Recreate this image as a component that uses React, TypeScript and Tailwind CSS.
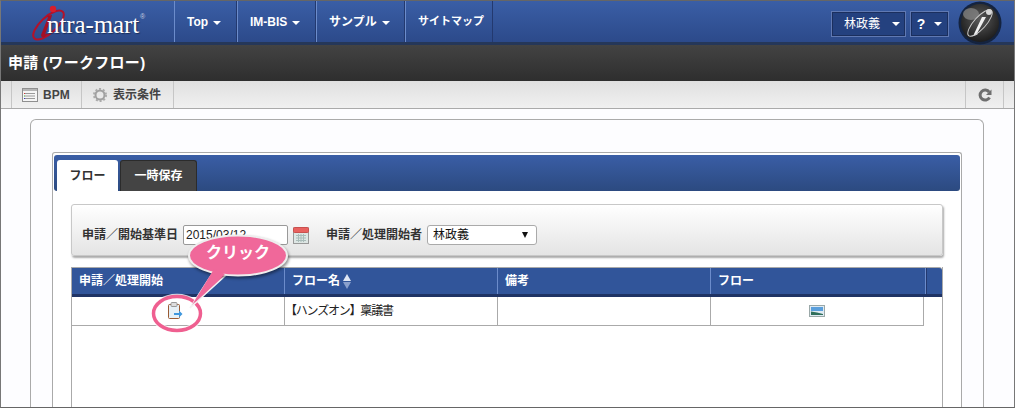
import React from 'react';

const FONT = "font-['Liberation_Sans','Noto_Sans_CJK_JP',sans-serif]";

const Caret = ({ className = '' }: { className?: string }) => (
  <span className={`inline-block w-0 h-0 border-x-[4px] border-x-transparent border-t-[4px] border-t-white ${className}`} />
);

const Logo = () => (
  <div className="relative w-[173px] h-full shrink-0">
    <svg className="absolute left-[30px] top-[4px]" width="36" height="36" viewBox="0 0 36 36">
      <ellipse cx="17.5" cy="20" rx="8" ry="19.5" transform="rotate(47 17.5 20)" fill="none" stroke="#b3122a" strokeWidth="2" />
      <circle cx="22" cy="4" r="3.2" fill="#d81e2c" />
      <path d="M21 10 L16 11 L17 12.5 L10 30 Q10 33 13.5 32 L17 29 L15.5 28.5 L14 29.5 L20.5 12 Z" fill="#a50f25" />
    </svg>
    <span className="absolute left-[46px] top-[10px] font-['Liberation_Serif',serif] text-[25px] leading-[28px] text-white tracking-[-0.1px] [text-shadow:1px_1px_1px_#1c2f5c]">
      ntra-mart
    </span>
    <span className="absolute left-[139px] top-[12px] text-[7px] leading-[8px] text-[#c8d0e0]">®</span>
  </div>
);

const NavItem = ({ label, caret = true, width, size = 'text-[12px]' }: { label: string; caret?: boolean; width: string; size?: string }) => (
  <div className={`${width} h-full shrink-0 flex items-center pl-[12px] gap-[5px] border-l border-l-[#6c8ccb] border-r border-r-[#23396f] ${size} font-bold text-white`}>
    <span>{label}</span>
    {caret && <Caret className="mt-[3px]" />}
  </div>
);

const HeadCell = ({ width, children, last = false }: { width: string; children?: React.ReactNode; last?: boolean }) => (
  <div className={`${width} h-full shrink-0 flex items-center pl-[7px] gap-[3px] text-[12px] font-bold text-white ${last ? '' : 'border-r border-r-[#6c8ccb]'}`}>
    {children}
  </div>
);

const Field = ({ label }: { label: string }) => (
  <span className="text-[12px] font-bold text-[#333] leading-[20px]">{label}</span>
);

const App = () => (
  <div className={`${FONT} relative w-[1015px] h-[408px] overflow-hidden bg-[#fdfdff] border-t border-t-[#666] border-x border-x-[#777] border-b border-b-[#666]`}>
    {/* ヘッダー */}
    <div className="relative h-[44px] flex bg-[linear-gradient(#3a5ea6,#2c4a8a)] border-b-[3px] border-b-[#253759]">
      <Logo />
      <NavItem label="Top" width="w-[63px]" />
      <NavItem label="IM-BIS" width="w-[79px]" />
      <NavItem label="サンプル" width="w-[89px]" />
      <NavItem label="サイトマップ" width="w-[88px]" caret={false} size="text-[11px]" />
      <div className="ml-auto flex items-start gap-[4px] pt-[10px] pr-[65px]">
        <div className="w-[75px] h-[26px] flex items-center justify-end gap-[12px] pr-[5px] bg-[#24417f] border border-[#6079b3] outline outline-[#1b2f5e] outline-offset-[-2px] text-[12px] text-white">
          <span>林政義</span>
          <Caret />
        </div>
        <div className="w-[39px] h-[26px] flex items-center justify-center gap-[9px] bg-[#24417f] border border-[#6079b3] outline outline-[#1b2f5e] outline-offset-[-2px] text-white">
          <span className="text-[14px] font-bold">?</span>
          <Caret />
        </div>
      </div>
      <svg className="absolute left-[957px] top-0" width="44" height="44" viewBox="0 0 44 44">
        <defs>
          <radialGradient id="ball" cx="50%" cy="40%" r="60%">
            <stop offset="0%" stopColor="#5a5a5a" />
            <stop offset="100%" stopColor="#1c1c1c" />
          </radialGradient>
        </defs>
        <circle cx="22" cy="22" r="21.5" fill="#14233f" />
        <circle cx="22" cy="22" r="19" fill="url(#ball)" />
        <ellipse cx="13" cy="13" rx="8" ry="6" fill="#8b8b8b" opacity="0.7" />
        <circle cx="31" cy="11" r="3" fill="#d8d8d8" />
        <path d="M28 16 L24 16 L16 33 Q15 35.5 18 34 L20 33 Q19 33 19.5 31.5 Z" fill="#f0f0f0" />
        <ellipse cx="22" cy="22" rx="6" ry="17" transform="rotate(42 22 22)" fill="none" stroke="#cfcfcf" strokeWidth="1" />
      </svg>
    </div>

    {/* タイトル */}
    <div className="h-[36px] flex items-center pl-[7px] bg-[linear-gradient(#434343,#2e2e2e)] text-[15px] font-bold tracking-[0.3px] text-white">
      申請 (ワークフロー)
    </div>

    {/* ツールバー */}
    <div className="h-[28px] flex items-stretch bg-[linear-gradient(#e0e0e0,#f0f0f0)] border-b border-b-[#aaa] text-[12px] text-[#333]">
      <div className="w-[10px] shrink-0" />
      <div className="w-[71px] shrink-0 flex items-center gap-[5px] pl-[10px] border-x border-x-[#c6c6c6]">
        <svg width="16" height="14" viewBox="0 0 16 14">
          <rect x="0.5" y="0.5" width="15" height="13" fill="#f5f5f5" stroke="#8f8f8f" />
          <rect x="1" y="1" width="14" height="2" fill="#b5b5b5" />
          <path d="M3 5.5h10M3 8h10M3 10.5h10" stroke="#9a9a9a" />
          <path d="M2 5.5h1" stroke="#d33" />
          <path d="M2 8h1" stroke="#3a3" />
          <path d="M2 10.5h1" stroke="#33c" />
        </svg>
        <span className="font-bold text-[#444]">BPM</span>
      </div>
      <div className="w-[92px] shrink-0 flex items-center gap-[6px] pl-[11px] border-r border-r-[#c6c6c6]">
        <svg width="14" height="14" viewBox="0 0 14 14">
          <circle cx="7" cy="7" r="4.5" fill="none" stroke="#a0a0a0" strokeWidth="2" />
          <circle cx="7" cy="7" r="6" fill="none" stroke="#aaaaaa" strokeWidth="2" strokeDasharray="2 1.8" />
        </svg>
        <span className="font-bold text-[#444]">表示条件</span>
      </div>
      <div className="ml-auto w-[39px] mr-[10px] flex items-center justify-center border-x border-x-[#c6c6c6]">
        <svg width="14" height="14" viewBox="0 0 14 14">
          <path d="M11.5 9.5 A5 5 0 1 1 11.2 4.2" fill="none" stroke="#6e6e6e" strokeWidth="3" />
          <path d="M13.5 1.5 V7 H8 Z" fill="#6e6e6e" />
        </svg>
      </div>
    </div>

    {/* パネル */}
    <div className="ml-[29px] mr-[30px] mt-[10px] h-[300px] pt-[32px] px-[21px] border border-[#aaa] border-b-0 rounded-t-[6px]">
      <div className="h-[300px] px-[1px] pt-[2px] bg-white border border-[#aaa] border-b-0 rounded-t-[3px]">
        <div className="h-[36px] flex items-end gap-[2px] pl-[3px] rounded-[3px] bg-[linear-gradient(#3a5ea6,#2c4a80)]">
          <div className="w-[61px] h-[31px] flex items-center justify-center rounded-t-[3px] bg-white text-[12px] font-bold text-[#333]">
            フロー
          </div>
          <div className="w-[77px] h-[31px] flex items-center justify-center rounded-t-[3px] bg-[#444] border border-[#2b2b2b] border-b-0 text-[12px] font-bold text-white">
            一時保存
          </div>
        </div>

        {/* 条件 */}
        <div className="ml-[17px] mt-[13px] w-[872px] h-[52px] flex items-center pl-[10px] pt-[10px] rounded-[3px] bg-[linear-gradient(#ffffff,#e4e4e4)] border border-[#c8c8c8] shadow-[1px_2px_2px_#aaa]">
          <Field label="申請／開始基準日" />
          <div className="ml-[5px] w-[105px] h-[20px] flex items-center pl-[2px] bg-white border border-[#999] rounded-[2px] text-[12px] text-[#222] font-['Liberation_Sans',sans-serif]">
            2015/03/12
          </div>
          <svg className="ml-[5px] mr-[17px] shrink-0" width="16" height="18" viewBox="0 0 16 18">
            <rect x="0.5" y="2" width="15" height="15.5" fill="#dde6e4" stroke="#999" />
            <rect x="0.5" y="1.5" width="15" height="5" rx="1" fill="#e8615f" stroke="#c9504e" />
            <path d="M3 9.5h10M3 12h10M3 14.5h10M5.5 8v8M8 8v8M10.5 8v8" stroke="#a9bcb9" />
          </svg>
          <Field label="申請／処理開始者" />
          <div className="ml-[5px] w-[110px] h-[20px] flex items-center justify-between pl-[5px] pr-[8px] bg-white border border-[#aaa] rounded-[3px] text-[12px] text-[#111]">
            <span>林政義</span>
            <span className="w-0 h-0 border-x-[3.5px] border-x-transparent border-t-[6px] border-t-[#111]" />
          </div>
        </div>

        {/* テーブル */}
        <div className="ml-[17px] mt-[11px] w-[872px] h-[200px] border-x border-x-[#aaa] bg-white">
          <div className="h-[30px] flex bg-[#31559a] border-t border-t-[#aaa] border-b-[3px] border-b-[#1f3364] rounded-tr-[3px]">
            <HeadCell width="w-[213px]">申請／処理開始</HeadCell>
            <HeadCell width="w-[213px]">
              <span>フロー名</span>
              <span className="flex flex-col gap-[1px]">
                <span className="w-0 h-0 border-x-[4.5px] border-x-transparent border-b-[7px] border-b-[#dfe6f3]" />
                <span className="w-0 h-0 border-x-[4.5px] border-x-transparent border-t-[7px] border-t-[#8aa0cc]" />
              </span>
            </HeadCell>
            <HeadCell width="w-[213px]">備考</HeadCell>
            <HeadCell width="w-[215px]">フロー</HeadCell>
            <div className="flex-1 border-l border-l-[#23396f]" />
          </div>
          <div className="w-[852px] h-[29px] flex border-b border-b-[#aaa] border-r border-r-[#aaa] text-[12px] text-[#222]">
            <div className="w-[213px] shrink-0 flex items-center justify-center border-r border-r-[#aaa] pr-[6px]">
              <svg width="16" height="18" viewBox="0 0 16 18">
                <rect x="1.5" y="2.5" width="11" height="14" rx="1" fill="#e6f0f6" stroke="#9a5b33" />
                <rect x="4" y="0.5" width="6" height="4" rx="1" fill="#ddd" stroke="#999" />
                <path d="M7 11h5V8.5l3.5 3.5-3.5 3.5V13H7z" fill="#3f97dd" />
              </svg>
            </div>
            <div className="w-[213px] shrink-0 flex items-center border-r border-r-[#aaa] tracking-[-1.2px]">【ハンズオン】稟議書</div>
            <div className="w-[213px] shrink-0 border-r border-r-[#aaa]" />
            <div className="flex-1 flex items-center justify-center">
              <svg width="16" height="12" viewBox="0 0 16 12">
                <rect x="0.5" y="0.5" width="15" height="11" fill="#dfeaf2" stroke="#9aa8a8" />
                <rect x="2" y="2" width="12" height="4" fill="#5a9fdc" />
                <path d="M2 6.5 L8 7.5 L14 9 V10 H2 Z" fill="#2f6f5b" />
              </svg>
            </div>
          </div>
        </div>
      </div>
    </div>

    {/* 吹き出し */}
    <svg className="absolute left-0 top-0 pointer-events-none" width="1015" height="408" viewBox="0 0 1015 408">
      <ellipse cx="176" cy="312.5" rx="23.5" ry="17" fill="none" stroke="#fff" strokeWidth="5.5" opacity="0.8" />
      <ellipse cx="176" cy="312.5" rx="23.5" ry="17" fill="none" stroke="#ef5f90" strokeWidth="3.5" />
      <path d="M213 270 L189 307 L225 274 Z" fill="#f0689a" stroke="#f3f3f3" strokeWidth="1.5" />
      <ellipse cx="237" cy="254.5" rx="49" ry="20" fill="#f0689a" stroke="#eee" strokeWidth="2" style={{ filter: 'drop-shadow(1px 2px 1.5px rgba(0,0,0,0.45))' }} />
      <path d="M213 268 L191 304 L224 273 Z" fill="#f0689a" />
    </svg>
    <div className="absolute left-[188px] top-[242px] w-[98px] text-center text-[16px] leading-[20px] font-bold text-white">
      クリック
    </div>
  </div>
);

export default App;
